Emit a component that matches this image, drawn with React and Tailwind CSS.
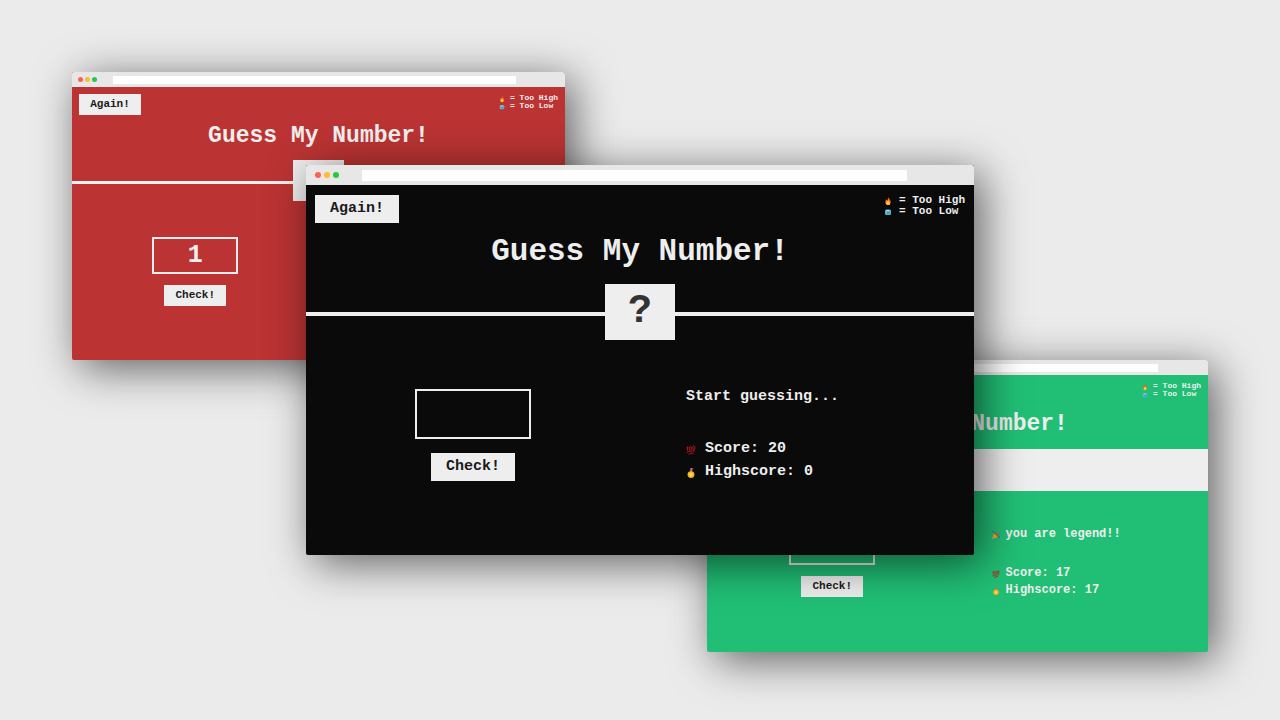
import React from "react";

const LARGE = {
  chrome: "h-5 pl-[9px] pr-[67px]",
  dots: "gap-[3px]",
  dot: "size-[6px]",
  address: "ml-[23px] h-[11px]",
  top: "min-h-[38px] px-[9px] pt-[10px]",
  again: "h-7 w-[84px] text-[15px]",
  legend: "text-[11px] leading-[11px]",
  legendIcon: "size-[8px] mr-[7px] mt-[2px]",
  title: "mt-[13px] text-[31px] leading-8",
  reveal: "mt-4 h-14",
  line: "mt-[4px] h-[4px]",
  box: "w-[70px] text-[40px]",
  left: "gap-[14px] pt-[49px] pb-[74px]",
  input: "h-[50px] w-[116px] text-[31px]",
  right: "pt-[49px] pl-[46px] text-[15px] leading-4",
  score: "mt-9 gap-[7px]",
  slot: "w-[19px]",
  icon: "size-[10px] mt-[4px]",
};

const SMALL = {
  chrome: "h-[15px] pl-[6px] pr-[49px]",
  dots: "gap-[2px]",
  dot: "size-[5px]",
  address: "ml-4 h-2",
  top: "min-h-7 px-[7px] pt-[7px]",
  again: "h-[21px] w-[62px] text-[11px]",
  legend: "text-[8px] leading-[8px]",
  legendIcon: "size-[6px] mr-[5px] mt-[2px]",
  title: "mt-[9px] text-[23px] leading-6",
  reveal: "mt-3 h-[41px]",
  line: "mt-[3px] h-[3px]",
  box: "w-[51px] text-[30px]",
  left: "gap-[11px] pt-9 pb-[54px]",
  input: "h-[37px] w-[86px] text-[25px]",
  right: "pt-9 pl-[34px] text-[12px] leading-3",
  score: "mt-[27px] gap-[5px]",
  slot: "w-[14px]",
  icon: "size-[8px] mt-[3px]",
};

const BANNER = {
  ...SMALL,
  chrome: "h-[15px] pl-[6px] pr-[50px]",
  reveal: "mt-[13px] h-[42px]",
  left: "gap-[11px] pt-[37px] pb-[55px]",
  right: "pt-[37px] pl-[34px] text-[12px] leading-3",
};

function Fire({ className }) {
  return (
    <svg viewBox="0 0 16 16" className={className} aria-hidden="true">
      <path d="M8 0c1 3 5 5 5.500 9.500C13.800 13 11.500 16 8 16s-6-3-5.500-6.500C2.800 7.500 4 6.500 4.500 4.500 6 5.500 6.500 6.500 6.500 7.500 8 5.500 8.500 3 8 0z" fill="#ff5a1f" />
      <path d="M8 6c.5 2 4 3.500 4 6.500S9.500 16 8 16s-4-1.200-4-3.500S7.500 9.500 8 6z" fill="#ffd22e" />
    </svg>
  );
}

function Ice({ className }) {
  return (
    <svg viewBox="0 0 16 16" className={className} aria-hidden="true">
      <rect x="2" y="3" width="12" height="11" rx="3" fill="#5fb2d0" />
      <path d="M4 5h7" stroke="#9fdcf0" strokeWidth="2" />
      <path d="M6 10h6" stroke="#2f84a4" strokeWidth="2" />
    </svg>
  );
}

function Hundred({ className }) {
  return (
    <svg viewBox="0 0 16 16" className={className} fill="none" stroke="#c81414" aria-hidden="true">
      <path d="M1 4l2-1-1 6" strokeWidth="1.600" />
      <ellipse cx="7" cy="5.500" rx="1.800" ry="3" strokeWidth="1.500" />
      <ellipse cx="12.500" cy="4.500" rx="1.800" ry="3" strokeWidth="1.500" />
      <path d="M1 12c4-2 9-2.500 13-2.500M4 15c2-1.200 5-2 8-2" strokeWidth="1.500" />
    </svg>
  );
}

function Medal({ className }) {
  return (
    <svg viewBox="0 0 16 16" className={className} aria-hidden="true">
      <path d="M7 0h4L9.500 6h-3z" fill="#c56a86" />
      <circle cx="8" cy="10.500" r="5.500" fill="#fbb617" />
      <path d="M8 7l1 2.300 2.300.2-1.700 1.600.5 2.400L8 12.300l-2.100 1.200.5-2.400-1.700-1.600L7 9.300z" fill="#ffe36b" />
    </svg>
  );
}

function Party({ className }) {
  return (
    <svg viewBox="0 0 16 16" className={className} aria-hidden="true">
      <path d="M0 16L4 4l8 8z" fill="#f7a928" />
      <path d="M4 4c4 1 7 4 8 8" stroke="#c0392b" strokeWidth="2" fill="none" />
      <path d="M8 5c2-1 1-4 3-5M11 8c2-2 3 0 5-2" stroke="#e0533f" strokeWidth="2" fill="none" />
      <path d="M1 0h3v3H1zM13 11h3v3h-3z" fill="#3f6fc4" />
    </svg>
  );
}

function StatusLine({ s, icon: Icon, children }) {
  return (
    <p className="flex items-start">
      {Icon && (
        <span className={`shrink-0 ${s.slot}`}>
          <Icon className={s.icon} />
        </span>
      )}
      <span className="whitespace-nowrap">{children}</span>
    </p>
  );
}

function GameWindow({ s, name, place, color, secret, again, guess, won, children }) {
  return (
    <section
      aria-label={name}
      className={`absolute flex flex-col overflow-hidden rounded-[2px] font-bold text-[#eee] shadow-[8px_8px_44px_rgba(0,0,0,0.6)] ${place} ${color}`}
    >
      <div className={`flex shrink-0 items-center bg-[#e7e7e7] ${s.chrome}`}>
        <div className={`flex ${s.dots}`}>
          <span className={`rounded-full bg-[#ff5f57] ${s.dot}`} />
          <span className={`rounded-full bg-[#febc2e] ${s.dot}`} />
          <span className={`rounded-full bg-[#28c840] ${s.dot}`} />
        </div>
        <input aria-label="Address" readOnly className={`min-w-0 flex-1 bg-white outline-none ${s.address}`} />
      </div>
      <header>
        <div className={`flex items-start justify-between ${s.top}`}>
          {again ? (
            <button type="button" className={`bg-[#eee] text-[#1a1a1a] ${s.again}`}>
              Again!
            </button>
          ) : (
            <span />
          )}
          <div className={s.legend}>
            <p className="flex">
              <Fire className={s.legendIcon} />= Too High
            </p>
            <p className="flex">
              <Ice className={s.legendIcon} />= Too Low
            </p>
          </div>
        </div>
        <h1 className={`text-center whitespace-nowrap ${s.title}`}>Guess My Number!</h1>
        {won ? (
          <div className={`bg-[#eee] ${s.reveal}`} />
        ) : (
          <div className={`flex items-center ${s.reveal}`}>
            <span className={`flex-1 bg-[#eee] ${s.line}`} />
            <div className={`flex h-full items-center justify-center bg-[#eee] text-[#333] ${s.box}`}>{secret}</div>
            <span className={`flex-1 bg-[#eee] ${s.line}`} />
          </div>
        )}
      </header>
      <main className="grid grid-cols-2">
        <div className={`flex flex-col items-center ${s.left}`}>
          <input
            aria-label="Your guess"
            inputMode="numeric"
            defaultValue={guess}
            className={`border-2 border-[#eee] bg-transparent text-center outline-none ${s.input}`}
          />
          <button type="button" className={`bg-[#eee] text-[#1a1a1a] ${s.again}`}>
            Check!
          </button>
        </div>
        <div className={s.right}>{children}</div>
      </main>
    </section>
  );
}

export default function App() {
  return (
    <div className="relative mx-auto min-h-screen w-full max-w-7xl overflow-hidden bg-[#ebebeb] font-['Liberation_Mono','DejaVu_Sans_Mono',monospace]">
      <GameWindow s={SMALL} name="Lost round" place="left-[72px] top-[72px] w-[493px]" color="bg-[#bb3333]" again guess="1" />
      <GameWindow s={BANNER} name="Won round" place="right-[72px] top-[360px] w-[501px]" color="bg-[#21bf75]" won>
        <StatusLine s={BANNER} icon={Party}>you are legend!!</StatusLine>
        <div className={`flex flex-col ${BANNER.score}`}>
          <StatusLine s={BANNER} icon={Hundred}>Score: 17</StatusLine>
          <StatusLine s={BANNER} icon={Medal}>Highscore: 17</StatusLine>
        </div>
      </GameWindow>
      <GameWindow
        s={LARGE}
        name="New round"
        place="left-1/2 top-[165px] w-[668px] -translate-x-1/2"
        color="bg-[#0a0a0a]"
        secret="?"
        again
      >
        <StatusLine s={LARGE}>Start guessing...</StatusLine>
        <div className={`flex flex-col ${LARGE.score}`}>
          <StatusLine s={LARGE} icon={Hundred}>Score: 20</StatusLine>
          <StatusLine s={LARGE} icon={Medal}>Highscore: 0</StatusLine>
        </div>
      </GameWindow>
    </div>
  );
}
